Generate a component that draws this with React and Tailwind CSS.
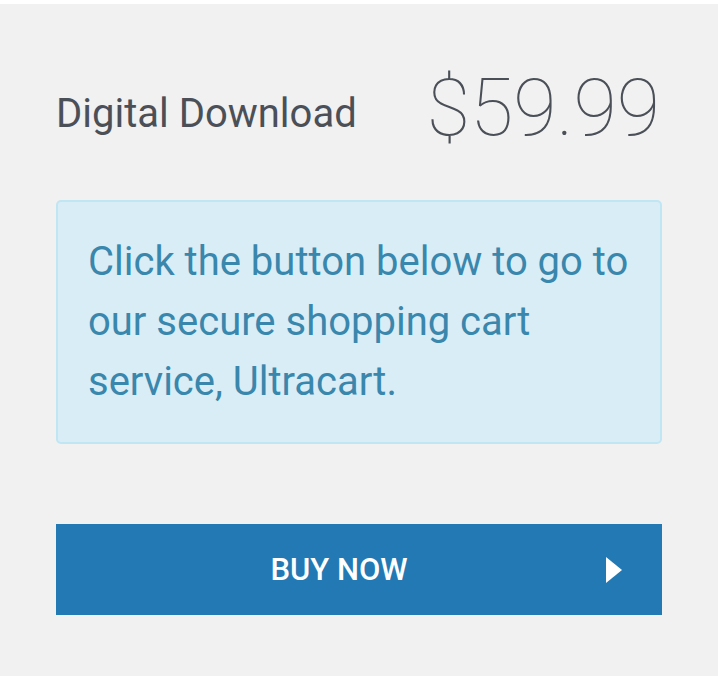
import React from 'react';

const PlayArrow = () => (
  <svg width="16" height="26" viewBox="0 0 16 26" className="shrink-0">
    <polygon points="0,0 16,13 0,26" fill="#ffffff" />
  </svg>
);

const App = () => {
  return (
    <div className="min-h-screen bg-white pt-1 font-['Roboto',sans-serif]">
      <div className="bg-[#f1f1f1] min-h-[672px] px-[56px] pt-[65px] pb-[60px]">
        {/* Title + price */}
        <div className="flex items-start justify-between">
          <h2 className="mt-[25px] text-[40px] leading-none font-normal text-[#4b5058]">Digital Download</h2>
          <div className="mr-[2px] text-[79px] leading-none font-thin text-[#4b5058]">$59.99</div>
        </div>

        {/* Info box */}
        <div className="mt-[52px] rounded-[5px] border-2 border-[#bfe6f2] bg-[#d9edf7] p-[30px]">
          <p className="text-[40px] leading-[60px] text-[#3a87ad]">
            Click the button below to go to our secure shopping cart service, Ultracart.
          </p>
        </div>

        {/* Buy button */}
        <button className="mt-[80px] flex h-[91px] w-full items-center bg-[#2279b3] pl-4 pr-[40px] text-white">
          <span className="flex-1 text-center text-[31px] font-medium leading-none">BUY NOW</span>
          <PlayArrow />
        </button>
      </div>
    </div>
  );
};

export default App;
